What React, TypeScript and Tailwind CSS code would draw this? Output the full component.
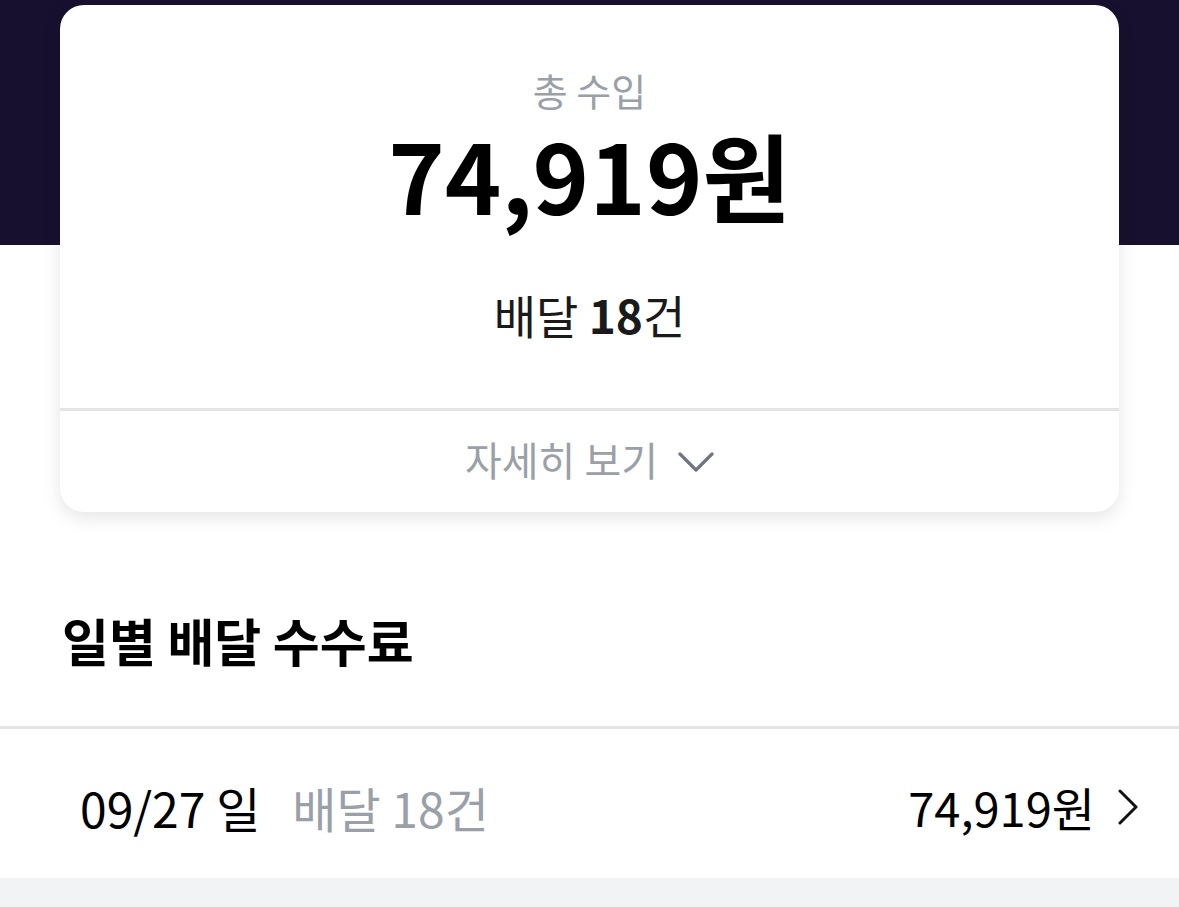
const FONT = '"Noto Sans CJK KR", "Noto Sans", sans-serif'

function DownChevron() {
  return (
    <svg width="36" height="24" viewBox="0 0 36 24" fill="none" className="mt-[6px]">
      <polyline
        points="2,4 18,20 34,4"
        stroke="#6f7680"
        strokeWidth="3.2"
        strokeLinecap="round"
        strokeLinejoin="round"
      />
    </svg>
  )
}

function RightChevron() {
  return (
    <svg width="22" height="36" viewBox="0 0 22 36" fill="none">
      <polyline
        points="3,2 19,18 3,34"
        stroke="#111111"
        strokeWidth="3"
        strokeLinecap="round"
        strokeLinejoin="round"
      />
    </svg>
  )
}

export default function App() {
  return (
    <div
      className="w-[1179px] h-[907px] overflow-hidden bg-white flex flex-col"
      style={{ fontFamily: FONT }}
    >
      {/* Summary card over the navy header band */}
      <div className="bg-[linear-gradient(#17112f_245px,#ffffff_245px)] pt-[5px] px-[60px]">
        <div className="bg-white rounded-[24px] shadow-[0_6px_18px_rgba(0,0,0,0.10)] flex flex-col">
          <div className="flex flex-col items-center pt-[63px] pb-[66px]">
            <div className="text-[38px] leading-[44px] text-[#9aa0a8]">총 수입</div>
            <div className="text-[96px] leading-[124px] font-bold text-black">74,919원</div>
            <div className="mt-[50px] text-[46px] leading-[56px] text-[#1a1a1a]">
              배달 <span className="font-bold">18</span>건
            </div>
          </div>
          <div className="h-[3px] bg-[#e3e4e8]" />
          <div className="h-[101px] pb-[6px] flex items-center justify-center gap-[20px] text-[40px] text-[#9aa0a8]">
            <span>자세히 보기</span>
            <DownChevron />
          </div>
        </div>
      </div>

      {/* Daily list */}
      <div className="px-[62px] pt-[96px] pb-[54px]">
        <h2 className="text-[51px] leading-[64px] font-bold text-black">일별 배달 수수료</h2>
      </div>
      <div className="h-[3px] bg-[#e3e4e8]" />
      <div className="h-[149px] pt-[6px] flex items-center justify-between pl-[80px] pr-[40px]">
        <div className="flex items-baseline gap-[32px] text-[48px] leading-[60px]">
          <span className="text-black">09/27 일</span>
          <span className="text-[#9aa0a8]">배달 18건</span>
        </div>
        <div className="flex items-center gap-[22px] text-[47px] leading-[60px] text-black">
          <span>74,919원</span>
          <RightChevron />
        </div>
      </div>
      <div className="flex-1 bg-[#f2f3f5]" />
    </div>
  )
}
